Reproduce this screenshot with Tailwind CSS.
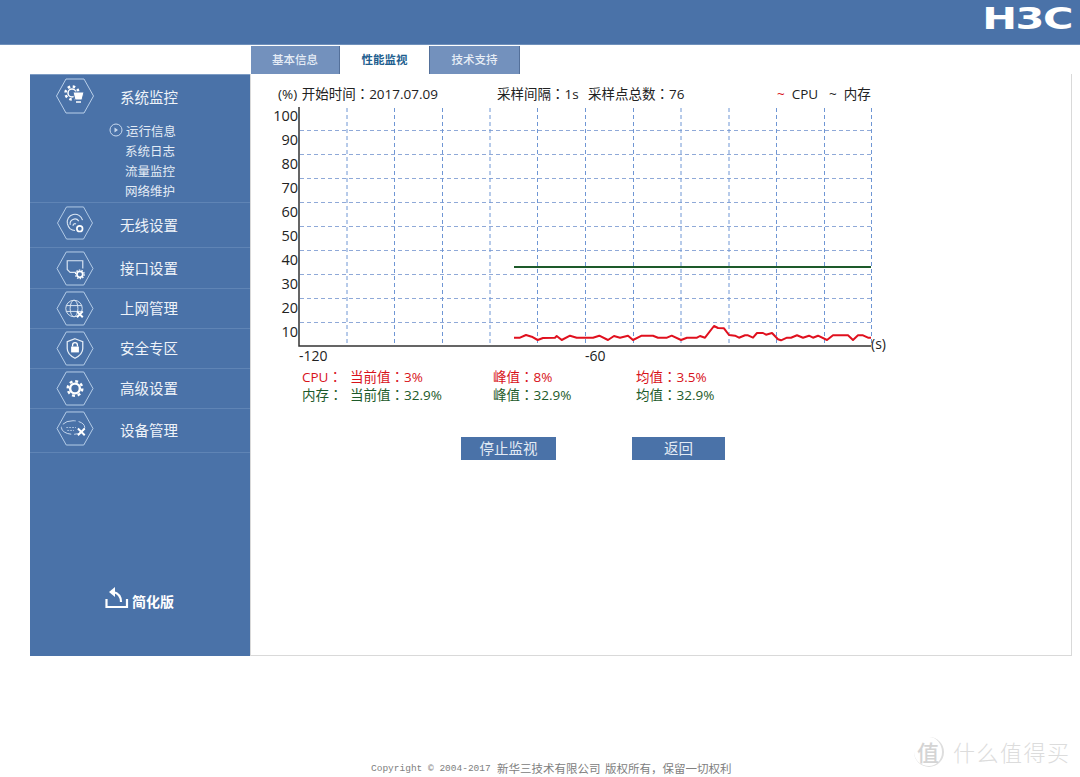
<!DOCTYPE html>
<html lang="en">
<head>
    <meta charset="UTF-8">
    <title>H3C</title>
    <script src="https://cdn.jsdelivr.net/npm/@tailwindcss/browser@4"></script>
</head>
<body class="bg-white">
<div class="relative w-[1080px] h-[777px] overflow-hidden bg-white text-[#222] font-['Open_Sans','Noto_Sans_CJK_SC',sans-serif]">

    <!-- header -->
    <div class="h-[45px] bg-[#4a72a8] flex justify-end items-center pr-[8px] border-b border-[#6f90bb]">
        <span class="font-['DejaVu_Sans',sans-serif] font-bold text-[31px] leading-none text-white scale-x-[1.34] origin-right tracking-[-1px] mt-[-7px]">H3C</span>
    </div>

    <!-- tabs -->
    <div class="flex h-[28px] ml-[251px] mt-[1px] text-[11.500px] font-medium">
        <div class="w-[89px] bg-[#7391bd] text-[#e6edf6] flex items-center justify-center border-r border-[#54709a]">基本信息</div>
        <div class="w-[89px] bg-white text-[#1f5f8f] font-bold flex items-center justify-center border-b border-white">性能监视</div>
        <div class="w-[91px] bg-[#7391bd] text-[#e6edf6] flex items-center justify-center border-x border-[#54709a]">技术支持</div>
    </div>

    <div class="flex ml-[30px] w-[1042px] h-[582px]">
        <!-- sidebar -->
        <div class="w-[220px] bg-[#4a72a8] text-[#eef3f9] border-t border-[#7d9cc4] flex flex-col">
            <div class="h-[128px] border-b border-[#5f84b5]">
                <div class="flex items-start pl-[26px] h-[47px]">
                    <svg class="mt-[3px]" width="38" height="36" viewBox="0 0 38 36" fill="none" stroke="#b9cfe9" stroke-width="1"><path d="M10 1H28L37.500 18L28 35H10L0.500 18Z"/><circle cx="16" cy="15" r="4" stroke="#fff" stroke-width="1.500"/><circle cx="16" cy="15" r="6.500" stroke="#fff" stroke-width="2.500" stroke-dasharray="2.500 2.600"/><path d="M17 14H28L26 22H19Z" fill="#fff" stroke="#4a72a8"/><path d="M20 24H25" stroke="#fff" stroke-width="1.500"/></svg>
                    <span class="ml-[26px] mt-[12px] text-[14.500px] leading-[22px]">系统监控</span>
                </div>
                <div class="relative pl-[95px] text-[12.500px] leading-[20px] text-[#e3ebf5]">
                    <svg class="absolute left-[79px] top-[1px]" width="14" height="14" viewBox="0 0 14 14" fill="none" stroke="#c8d9ee"><circle cx="7" cy="7" r="6"/><path d="M5.500 4.500L9 7L5.500 9.500Z" fill="#c8d9ee" stroke="none"/></svg>
                    <div class="ml-[1px]">运行信息</div>
                    <div>系统日志</div>
                    <div>流量监控</div>
                    <div>网络维护</div>
                </div>
            </div>

            <div class="h-[45px] border-b border-[#5f84b5] flex items-start pl-[26px]">
                <svg class="mt-[3px]" width="38" height="34" viewBox="0 0 38 36" fill="none" stroke="#b9cfe9"><path d="M10 1H28L37.500 18L28 35H10L0.500 18Z"/><path d="M11 19A8 8 0 0 1 27 15M14 20A5 5 0 0 1 23 16M17 21A2 2 0 0 1 20 19" stroke="#dbe6f3" stroke-width="1.200"/><path d="M11 19C12 23 15 26 19 26" stroke="#dbe6f3" stroke-width="1.200"/><circle cx="24" cy="24" r="3" stroke="#fff" stroke-width="1.800"/></svg>
                <span class="ml-[26px] mt-[12px] text-[14.500px] leading-[22px]">无线设置</span>
            </div>

            <div class="h-[41px] border-b border-[#5f84b5] flex items-start pl-[26px]">
                <svg class="mt-[3px]" width="38" height="35" viewBox="0 0 38 36" fill="none" stroke="#b9cfe9"><path d="M10 1H28L37.500 18L28 35H10L0.500 18Z"/><path d="M20 22H14L11 19V10H27V18" stroke="#dbe6f3" stroke-width="1.200"/><circle cx="24" cy="24" r="3" stroke="#fff" stroke-width="1.800"/><circle cx="24" cy="24" r="4.500" stroke="#fff" stroke-width="1.200" stroke-dasharray="1.500 1.300"/></svg>
                <span class="ml-[26px] mt-[10px] text-[14.500px] leading-[22px]">接口设置</span>
            </div>

            <div class="h-[40px] border-b border-[#5f84b5] flex items-start pl-[26px]">
                <svg class="mt-[2px]" width="38" height="35" viewBox="0 0 38 36" fill="none" stroke="#b9cfe9"><path d="M10 1H28L37.500 18L28 35H10L0.500 18Z"/><circle cx="18" cy="18" r="8.500" stroke="#dbe6f3"/><ellipse cx="18" cy="18" rx="4" ry="8.500" stroke="#dbe6f3"/><path d="M10 15H26M10 21H26" stroke="#dbe6f3"/><path d="M21 21L27 27M27 21L21 27" stroke="#fff" stroke-width="2"/></svg>
                <span class="ml-[26px] mt-[9px] text-[14.500px] leading-[22px]">上网管理</span>
            </div>

            <div class="h-[40px] border-b border-[#5f84b5] flex items-start pl-[26px]">
                <svg class="mt-[2px]" width="38" height="35" viewBox="0 0 38 36" fill="none" stroke="#b9cfe9"><path d="M10 1H28L37.500 18L28 35H10L0.500 18Z"/><path d="M19 8L27 11V18C27 23 23 26 19 28C15 26 11 23 11 18V11Z" stroke="#e6eef7" stroke-width="1.300"/><rect x="15" y="16" width="8" height="6" fill="#fff" stroke="none"/><path d="M16.500 16V14.500A2.500 2.500 0 0 1 21.500 14.500V16" stroke="#fff" stroke-width="1.300"/></svg>
                <span class="ml-[26px] mt-[9px] text-[14.500px] leading-[22px]">安全专区</span>
            </div>

            <div class="h-[40px] border-b border-[#5f84b5] flex items-start pl-[26px]">
                <svg class="mt-[2px]" width="38" height="35" viewBox="0 0 38 36" fill="none" stroke="#b9cfe9"><path d="M10 1H28L37.500 18L28 35H10L0.500 18Z"/><circle cx="19" cy="18" r="5" stroke="#fff" stroke-width="2.500"/><circle cx="19" cy="18" r="7.500" stroke="#fff" stroke-width="2.500" stroke-dasharray="3 2.890"/></svg>
                <span class="ml-[26px] mt-[9px] text-[14.500px] leading-[22px]">高级设置</span>
            </div>

            <div class="h-[44px] border-b border-[#5f84b5] flex items-start pl-[26px]">
                <svg class="mt-[2px]" width="38" height="35" viewBox="0 0 38 36" fill="none" stroke="#b9cfe9"><path d="M10 1H28L37.500 18L28 35H10L0.500 18Z"/><ellipse cx="17" cy="17" rx="12" ry="7" stroke="#c8d9ee" stroke-dasharray="14 3"/><path d="M10 17H20M11 20H18" stroke="#a9c1df" stroke-dasharray="2 1"/><path d="M22 18L29 25M29 18L22 25" stroke="#fff" stroke-width="2"/></svg>
                <span class="ml-[26px] mt-[11px] text-[14.500px] leading-[22px]">设备管理</span>
            </div>

            <div class="flex items-center pl-[75px] mt-[129px]">
                <svg width="24" height="23" viewBox="0 0 24 23" fill="none" stroke="#fff" stroke-width="2.200"><path d="M1.500 13V21H22V13"/><path d="M16 16C16 10 13 7 8 6"/><path d="M10 1L4 6L10 11Z" fill="#fff" stroke="none"/></svg>
                <span class="ml-[3px] mt-[9px] text-[14px] font-bold text-white">简化版</span>
            </div>
        </div>

        <!-- main panel -->
        <div class="flex-1 border border-[#d9d9d9] border-t-0">
            <div class="flex items-center h-[21px] mt-[9px] pl-[27px] text-[13.500px] leading-[18px] text-[#222] whitespace-nowrap">
                <span class="w-[219px] h-[18px]"><span class="mr-[1px]">(%)</span> 开始时间<span class="font-['Noto_Sans_CJK_TC'] leading-none">：</span>2017.07.09</span>
                <span class="w-[91px] h-[18px] mt-[1px]">采样间隔<span class="font-['Noto_Sans_CJK_TC'] leading-none">：</span>1s</span>
                <span class="w-[189px] h-[18px] mt-[1px]">采样点总数<span class="font-['Noto_Sans_CJK_TC'] leading-none">：</span>76</span>
                <span class="w-[52px] h-[18px] mt-[1px]"><span class="text-[#d8121a]">~</span>&nbsp; CPU</span>
                <span class="h-[18px] mt-[1px]">~&nbsp; 内存</span>
            </div>

            <svg class="block ml-[19px] mt-[1px] font-['Open_Sans',sans-serif]" width="630" height="260" viewBox="270 105 630 260" fill="none">
                <g stroke="#8fa9d8" stroke-width="1" stroke-dasharray="4 3">
                    <path d="M300 130.500H871M300 154.500H871M300 178.500H871M300 202.500H871M300 226.500H871M300 250.500H871M300 274.500H871M300 298.500H871M300 322.500H871"/>
                </g>
                <g stroke="#6f96d4" stroke-width="1" stroke-dasharray="4 3">
                    <path d="M347 108V346M394.500 108V346M442.500 108V346M490 108V346M537.500 108V346M585.500 108V346M633.500 108V346M681 108V346M729 108V346M776.500 108V346M824.500 108V346M871.500 108V346"/>
                </g>
                <path d="M299 107V346H871" stroke="#333" stroke-width="1.500"/>
                <path d="M514 267H871" stroke="#1d5a2a" stroke-width="2"/>
                <polyline stroke="#e0101e" stroke-width="2" stroke-linejoin="round" points="514,337.700 520,337.700 526,335 531.700,336.700 537.700,340 543,338 555,337.700 556.700,336 561.700,340 570,335.700 576.700,337.700 593,337.700 599.300,335.700 608,340 614,336 620,337.700 628,335.700 633,340 641.700,335.700 653,335.700 658,337.700 667,337.700 671.700,335.700 681,340 687,337.700 697,337.700 700,336 705,337.700 714,326 718,328 724,328.300 729,335 735,335.700 739,337.700 745,335.300 748,335.300 753,337.700 757,333 763,333 766,334.700 772,333 778,339.300 781,340.300 787,337.700 791,337.700 797,335.300 803,337.700 809,335.700 813,337.700 818,335.700 827,340 833,335.300 848,335.300 853,340 858,335.300 863,335.300 868,337.700 871,337.700"/>
                <g fill="#222" font-size="14.500" text-anchor="end">
                    <text x="298" y="121">100</text>
                    <text x="298" y="145">90</text>
                    <text x="298" y="169">80</text>
                    <text x="298" y="193">70</text>
                    <text x="298" y="217">60</text>
                    <text x="298" y="241">50</text>
                    <text x="298" y="265">40</text>
                    <text x="298" y="289">30</text>
                    <text x="298" y="313">20</text>
                    <text x="298" y="337">10</text>
                </g>
                <g fill="#222" font-size="14">
                    <text x="299" y="361">-120</text>
                    <text x="585" y="361">-60</text>
                    <text x="871" y="349" font-size="14">(s)</text>
                </g>
            </svg>

            <div class="ml-[51px] mt-[3px] text-[13.500px] leading-[18px] whitespace-nowrap">
                <div class="flex h-[18px] text-[#d8121a]">
                    <span class="w-[48px]">CPU<span class="font-['Noto_Sans_CJK_TC'] leading-none">：</span></span>
                    <span class="w-[143px]">当前值<span class="font-['Noto_Sans_CJK_TC'] leading-none">：</span>3%</span>
                    <span class="w-[143px]">峰值<span class="font-['Noto_Sans_CJK_TC'] leading-none">：</span>8%</span>
                    <span>均值<span class="font-['Noto_Sans_CJK_TC'] leading-none">：</span>3.5%</span>
                </div>
                <div class="flex h-[18px] text-[#1d5a2a]">
                    <span class="w-[48px]">内存<span class="font-['Noto_Sans_CJK_TC'] leading-none">：</span></span>
                    <span class="w-[143px]">当前值<span class="font-['Noto_Sans_CJK_TC'] leading-none">：</span>32.9%</span>
                    <span class="w-[143px]">峰值<span class="font-['Noto_Sans_CJK_TC'] leading-none">：</span>32.9%</span>
                    <span>均值<span class="font-['Noto_Sans_CJK_TC'] leading-none">：</span>32.9%</span>
                </div>
            </div>

            <div class="flex ml-[210px] mt-[33px] text-[14.500px] text-[#e3ebf5]">
                <div class="w-[95px] h-[23px] bg-[#4a72a8] flex items-center justify-center">停止监视</div>
                <div class="w-[93px] h-[23px] ml-[76px] bg-[#4a72a8] flex items-center justify-center">返回</div>
            </div>
        </div>
    </div>

    <!-- footer -->
    <div class="flex mt-[106px] pl-[371px] text-[#808080] text-[11.500px] leading-[14px] whitespace-nowrap">
        <span class="w-[126px] font-['Liberation_Mono',monospace] text-[9.500px]">Copyright © 2004-2017</span>
        <span class="w-[108px]">新华三技术有限公司</span>
        <span>版权所有，保留一切权利</span>
    </div>

    <!-- watermark over the corner of the page -->
    <div class="absolute left-[914px] top-[737px] flex items-center text-[#dcdcdc]">
        <span class="w-[30px] h-[30px] rounded-full border-r-2 border-b border-[#dedede] flex items-center justify-center text-[22px] leading-none text-[#d4d4d4] font-medium">值</span>
        <span class="ml-[9px] text-[22px] leading-none tracking-[1.500px] font-light">什么值得买</span>
    </div>
</div>
</body>
</html>
